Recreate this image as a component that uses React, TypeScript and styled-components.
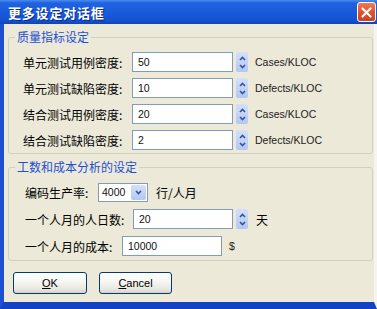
import styled, { createGlobalStyle } from "styled-components";

const GlobalStyle = createGlobalStyle`
  html, body {
    margin: 0;
    padding: 0;
    background: #fff;
  }
  body {
    font-family: "Noto Sans CJK SC", "Liberation Sans", sans-serif;
  }
`;

const Window = styled.div`
  width: 377px;
  height: 309px;
  display: flex;
  flex-direction: column;
  overflow: hidden;
`;

const TitleBar = styled.div`
  height: 24px;
  flex: none;
  display: flex;
  align-items: center;
  justify-content: space-between;
  padding-left: 8px;
  background: linear-gradient(180deg, #4a8cf0 0px, #1f62de 3px, #1a5bd9 50%, #1552cf 85%, #0e44b8 100%);
`;

const Title = styled.span`
  color: #fff;
  font-size: 13px;
  font-weight: 700;
  letter-spacing: 0.8px;
  text-shadow: 1px 1px 0 #0a2a8a;
`;

const CloseButton = styled.div`
  width: 19px;
  height: 20px;
  margin-right: 1px;
  box-sizing: border-box;
  border: 1px solid #fff;
  border-radius: 3px;
  background: linear-gradient(180deg, #f07a55 0%, #e0532d 50%, #c94220 100%);
  display: flex;
  align-items: center;
  justify-content: center;
`;

const Body = styled.div`
  flex: 1;
  display: flex;
  flex-direction: column;
  background: #ece9d8;
  border-left: 4px solid #1c50d0;
  border-right: 3px solid #f6f4ec;
  border-bottom: 7px solid #1343c4;
  padding: 6px 1px 0 4px;
`;

const Group = styled.fieldset<{ $gap?: number }>`
  margin: 0;
  margin-top: ${p => p.$gap ?? 0}px;
  padding: 0;
  min-width: 0;
  border: 1px solid #d0d0bf;
  border-radius: 3px;
`;

const Legend = styled.legend`
  margin-left: 6px;
  padding: 0 2px;
  color: #1c4fd6;
  font-size: 12px;
  line-height: 14px;
`;

const Rows = styled.div<{ $indent: number; $gap: number; $top: number; $bottom: number }>`
  display: flex;
  flex-direction: column;
  gap: ${p => p.$gap}px;
  padding: ${p => p.$top}px 0 ${p => p.$bottom}px ${p => p.$indent}px;
`;

const Row = styled.div`
  height: 20px;
  display: flex;
  align-items: center;
`;

const Label = styled.span<{ $w: number }>`
  width: ${p => p.$w}px;
  flex: none;
  font-size: 12px;
  color: #000;
  white-space: nowrap;
`;

const TextBox = styled.div<{ $w?: number }>`
  width: ${p => p.$w ?? 101}px;
  height: 20px;
  box-sizing: border-box;
  border: 1px solid #7f9db9;
  background: #fff;
  padding-left: 5px;
  display: flex;
  align-items: center;
  font-family: "Liberation Sans", sans-serif;
  font-size: 10.5px;
  color: #111;
`;

const Spin = styled.div`
  width: 12px;
  height: 20px;
  margin-left: 3px;
  box-sizing: border-box;
  border-radius: 2px;
  background: linear-gradient(180deg, #d4e0fb, #b3c7f3);
  display: flex;
  flex-direction: column;
  justify-content: space-around;
  align-items: center;
  padding: 2px 0;
`;

const Unit = styled.span<{ $gap?: number }>`
  margin-left: ${p => p.$gap ?? 7}px;
  font-family: "Liberation Sans", "Noto Sans CJK SC", sans-serif;
  font-size: 10.5px;
  color: #222;
  white-space: nowrap;
`;

const CjkUnit = styled(Unit)`
  font-family: "Noto Sans CJK SC", sans-serif;
  font-size: 12px;
  color: #000;
`;

const Combo = styled.div`
  width: 50px;
  height: 19px;
  box-sizing: border-box;
  border: 1px solid #7f9db9;
  background: #fff;
  display: flex;
  align-items: stretch;
`;

const ComboValue = styled.span`
  flex: 1;
  padding-left: 3px;
  display: flex;
  align-items: center;
  font-family: "Liberation Sans", sans-serif;
  font-size: 10.5px;
  color: #111;
`;

const ComboButton = styled.div`
  width: 15px;
  margin: 1px;
  border-radius: 2px;
  background: linear-gradient(180deg, #d4e0fb, #b3c7f3);
  display: flex;
  align-items: center;
  justify-content: center;
`;

const ButtonBar = styled.div`
  display: flex;
  gap: 12px;
  margin-top: 11px;
  padding-left: 5px;
`;

const Button = styled.div<{ $w: number }>`
  width: ${p => p.$w}px;
  height: 22px;
  box-sizing: border-box;
  border: 1px solid #003c74;
  border-radius: 3px;
  background: linear-gradient(180deg, #ffffff 0%, #f6f6f2 45%, #e6e4dc 85%, #d6d0c5 100%);
  display: flex;
  align-items: center;
  justify-content: center;
  font-family: "Liberation Sans", sans-serif;
  font-size: 11px;
  color: #000;

  u {
    text-decoration: underline;
  }
`;

const Chevron = ({ up }: { up?: boolean }) => (
  <svg width="7" height="5" viewBox="0 0 7 5">
    <polyline
      points={up ? "1,4 3.5,1.5 6,4" : "1,1 3.5,3.5 6,1"}
      fill="none"
      stroke="#34539a"
      strokeWidth="1.6"
    />
  </svg>
);

const Spinner = () => (
  <Spin>
    <Chevron up />
    <Chevron />
  </Spin>
);

const quality = [
  { label: "单元测试用例密度:", value: "50", unit: "Cases/KLOC" },
  { label: "单元测试缺陷密度:", value: "10", unit: "Defects/KLOC" },
  { label: "结合测试用例密度:", value: "20", unit: "Cases/KLOC" },
  { label: "结合测试缺陷密度:", value: "2", unit: "Defects/KLOC" },
];

export default function App() {
  return (
    <>
      <GlobalStyle />
      <Window>
        <TitleBar>
          <Title>更多设定对话框</Title>
          <CloseButton>
            <svg width="11" height="11" viewBox="0 0 11 11">
              <path d="M1.5 1.5 L9.5 9.5 M9.5 1.5 L1.5 9.5" stroke="#fff" strokeWidth="2.2" strokeLinecap="round" />
            </svg>
          </CloseButton>
        </TitleBar>
        <Body>
          <Group>
            <Legend>质量指标设定</Legend>
            <Rows $indent={14} $gap={6} $top={8} $bottom={3}>
              {quality.map(q => (
                <Row key={q.label}>
                  <Label $w={109}>{q.label}</Label>
                  <TextBox>{q.value}</TextBox>
                  <Spinner />
                  <Unit>{q.unit}</Unit>
                </Row>
              ))}
            </Rows>
          </Group>
          <Group $gap={6}>
            <Legend>工数和成本分析的设定</Legend>
            <Rows $indent={16} $gap={7} $top={8} $bottom={4}>
              <Row>
                <Label $w={73}>编码生产率:</Label>
                <Combo>
                  <ComboValue>4000</ComboValue>
                  <ComboButton><Chevron /></ComboButton>
                </Combo>
                <CjkUnit $gap={8}>行/人月</CjkUnit>
              </Row>
              <Row>
                <Label $w={108}>一个人月的人日数:</Label>
                <TextBox $w={100}>20</TextBox>
                <Spinner />
                <CjkUnit $gap={8}>天</CjkUnit>
              </Row>
              <Row>
                <Label $w={97}>一个人月的成本:</Label>
                <TextBox $w={100}>10000</TextBox>
                <Unit $gap={7}>$</Unit>
              </Row>
            </Rows>
          </Group>
          <ButtonBar>
            <Button $w={74}><span><u>O</u>K</span></Button>
            <Button $w={73}><span><u>C</u>ancel</span></Button>
          </ButtonBar>
        </Body>
      </Window>
    </>
  );
}
